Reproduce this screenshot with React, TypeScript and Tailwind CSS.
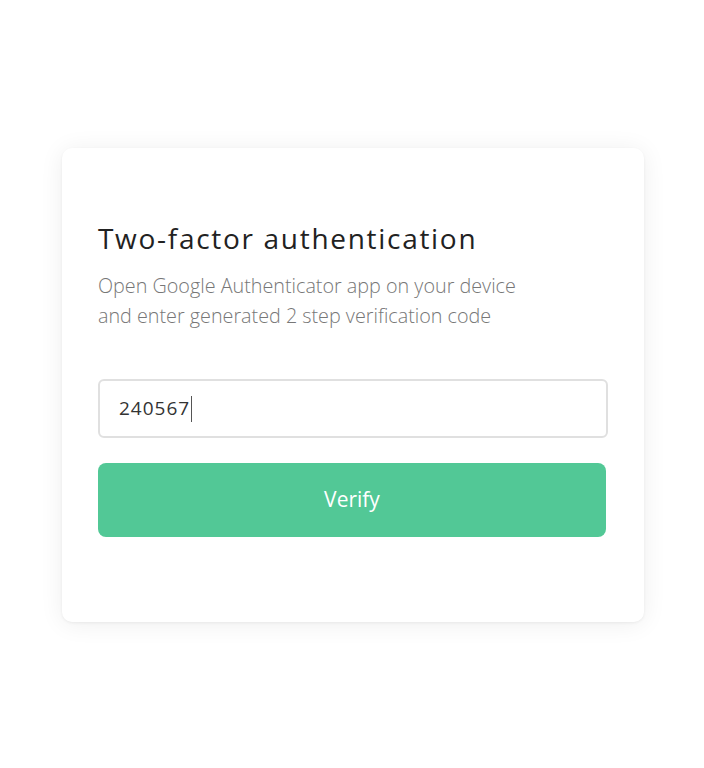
import React, { useState } from 'react';

const App: React.FC = () => {
  const [code, setCode] = useState('240567');

  return (
    <div className="min-h-screen w-full flex items-center justify-center pl-[2px] pt-[2px] bg-white font-['Open_Sans',sans-serif]">
      <div className="w-[582px] h-[474px] rounded-[10px] bg-white shadow-[0_2px_24px_rgba(0,0,0,0.07),0_1px_3px_rgba(0,0,0,0.06)] px-[36px] pt-[72px]">
        <h1 className="text-[28px] leading-[36px] text-[#222] tracking-[1.7px]">Two-factor authentication</h1>
        <p className="mt-[15px] text-[19.75px] leading-[30px] font-light text-[#777]">
          Open Google Authenticator app on your device
          <br />
          and enter generated 2 step verification code
        </p>

        <div className="mt-[48px] h-[59px] w-[510px] rounded-[6px] border-2 border-[#e0e0e0] flex items-center px-[19px]">
          <span className="text-[19px] text-[#333] tracking-[1px]">{code}</span>
          <span className="ml-[1px] w-px h-[26px] bg-[#555]" />
        </div>

        <button
          type="button"
          onClick={() => setCode('')}
          className="mt-[25px] h-[74px] w-[508px] rounded-[8px] bg-[#52c896] text-white text-[21px] flex items-center justify-center"
        >
          Verify
        </button>
      </div>
    </div>
  );
};

export default App;
